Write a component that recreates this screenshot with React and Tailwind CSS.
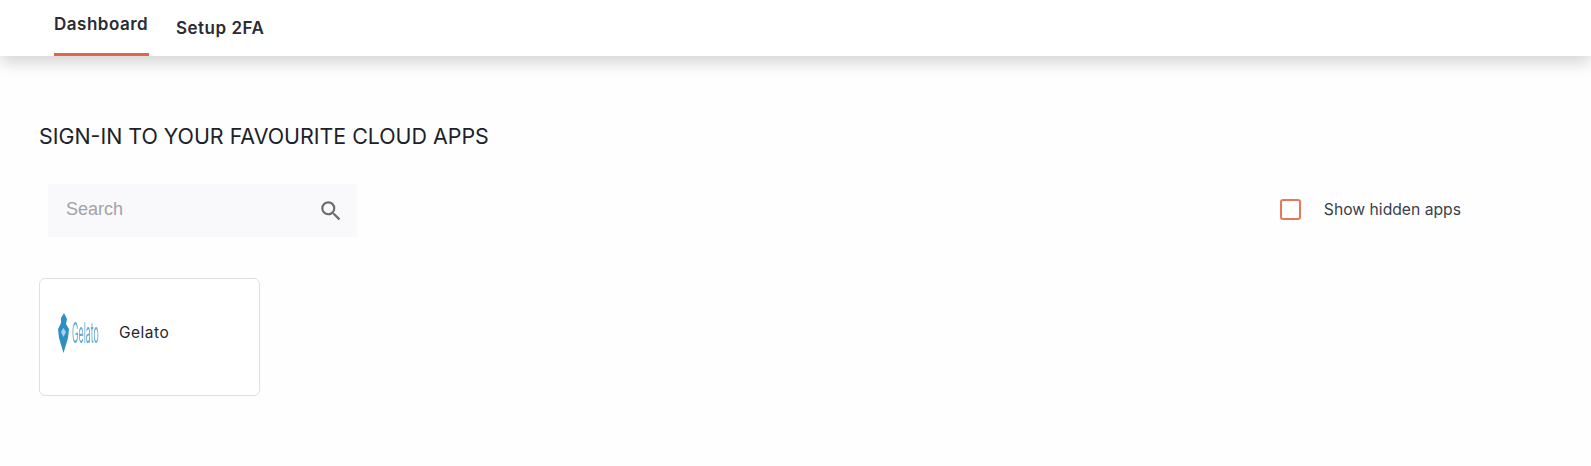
import React from "react";

function Navbar() {
  return (
    <header className="h-14 bg-white shadow-[0_7px_15px_0_rgba(0,0,0,0.16)] relative">
      <nav className="flex h-14 pl-[54px] gap-[27px] text-[17px] tracking-[0.5px] font-semibold text-[#2b2b33]">
        <a className="flex items-center h-14 w-[95px] pb-[3px] border-b-[3px] border-[#e0654a]">Dashboard</a>
        <a className="flex items-center h-14 pt-[1px]">Setup 2FA</a>
      </nav>
    </header>
  );
}

function SearchIcon() {
  return (
    <svg width="26" height="26" viewBox="0 0 24 24" fill="#6b6b70">
      <path d="M15.5 14h-.79l-.28-.27A6.471 6.471 0 0 0 16 9.5 6.5 6.5 0 1 0 9.5 16c1.61 0 3.09-.59 4.23-1.57l.27.28v.79l5 4.99L20.49 19l-4.99-5zm-6 0C7.01 14 5 11.99 5 9.5S7.01 5 9.5 5 14 7.01 14 9.5 11.99 14 9.5 14z" />
    </svg>
  );
}

function GelatoLogo() {
  return (
    <div className="flex items-center w-[41px] h-[42px] blur-[0.6px]">
      <svg width="11" height="40" viewBox="0 0 11 40" className="shrink-0">
        <path d="M6 0 L9 6 L8 11 L11 16 L10 25 L5.5 40 L1 25 L0 16 L3 10 L3 5 Z" fill="#2f8fc4" />
        <path d="M5.5 15 L8 19 L5.5 24 L3 19 Z" fill="#a9d2e9" />
      </svg>
      <span className="ml-[3px] inline-block origin-left scale-x-[0.44] scale-y-[1.45] text-[20px] leading-none text-[#69add4]">
        Gelato
      </span>
    </div>
  );
}

export default function App() {
  return (
    <div
      className="h-[466px] bg-[#fefefe] overflow-hidden"
      style={{ fontFamily: "Inter, 'Noto Sans', sans-serif" }}
    >
      <Navbar />
      <main className="pl-[39px] pr-[130px] pt-[68px]">
        <h1 className="text-[21.4px] leading-6 text-[#1d2129]">
          SIGN-IN TO YOUR FAVOURITE CLOUD APPS
        </h1>
        <div className="flex items-center justify-between mt-[36px] pl-[9px]">
          <div className="flex items-center justify-between w-[309px] h-[53px] pl-[18px] pr-[13px] bg-[#f9f8fb]">
            <span className="text-[18px] -mt-[3px] text-[#a3a3a8]" style={{ fontFamily: "'Liberation Sans', sans-serif" }}>
              Search
            </span>
            <SearchIcon />
          </div>
          <label className="flex items-center gap-[23px] -mt-[2px] text-[15.7px] text-[#3a3f4a]">
            <span className="w-[21px] h-[21px] rounded-[3px] border-[2.5px] border-[#e8775a] bg-white" />
            Show hidden apps
          </label>
        </div>
        <div className="flex items-center w-[221px] h-[118px] mt-[41px] pl-[18px] pb-2 gap-5 bg-white border border-[#e0e0e0] rounded-md">
          <GelatoLogo />
          <span className="text-[15.5px] tracking-[0.5px] text-[#26262c]">Gelato</span>
        </div>
      </main>
    </div>
  );
}
